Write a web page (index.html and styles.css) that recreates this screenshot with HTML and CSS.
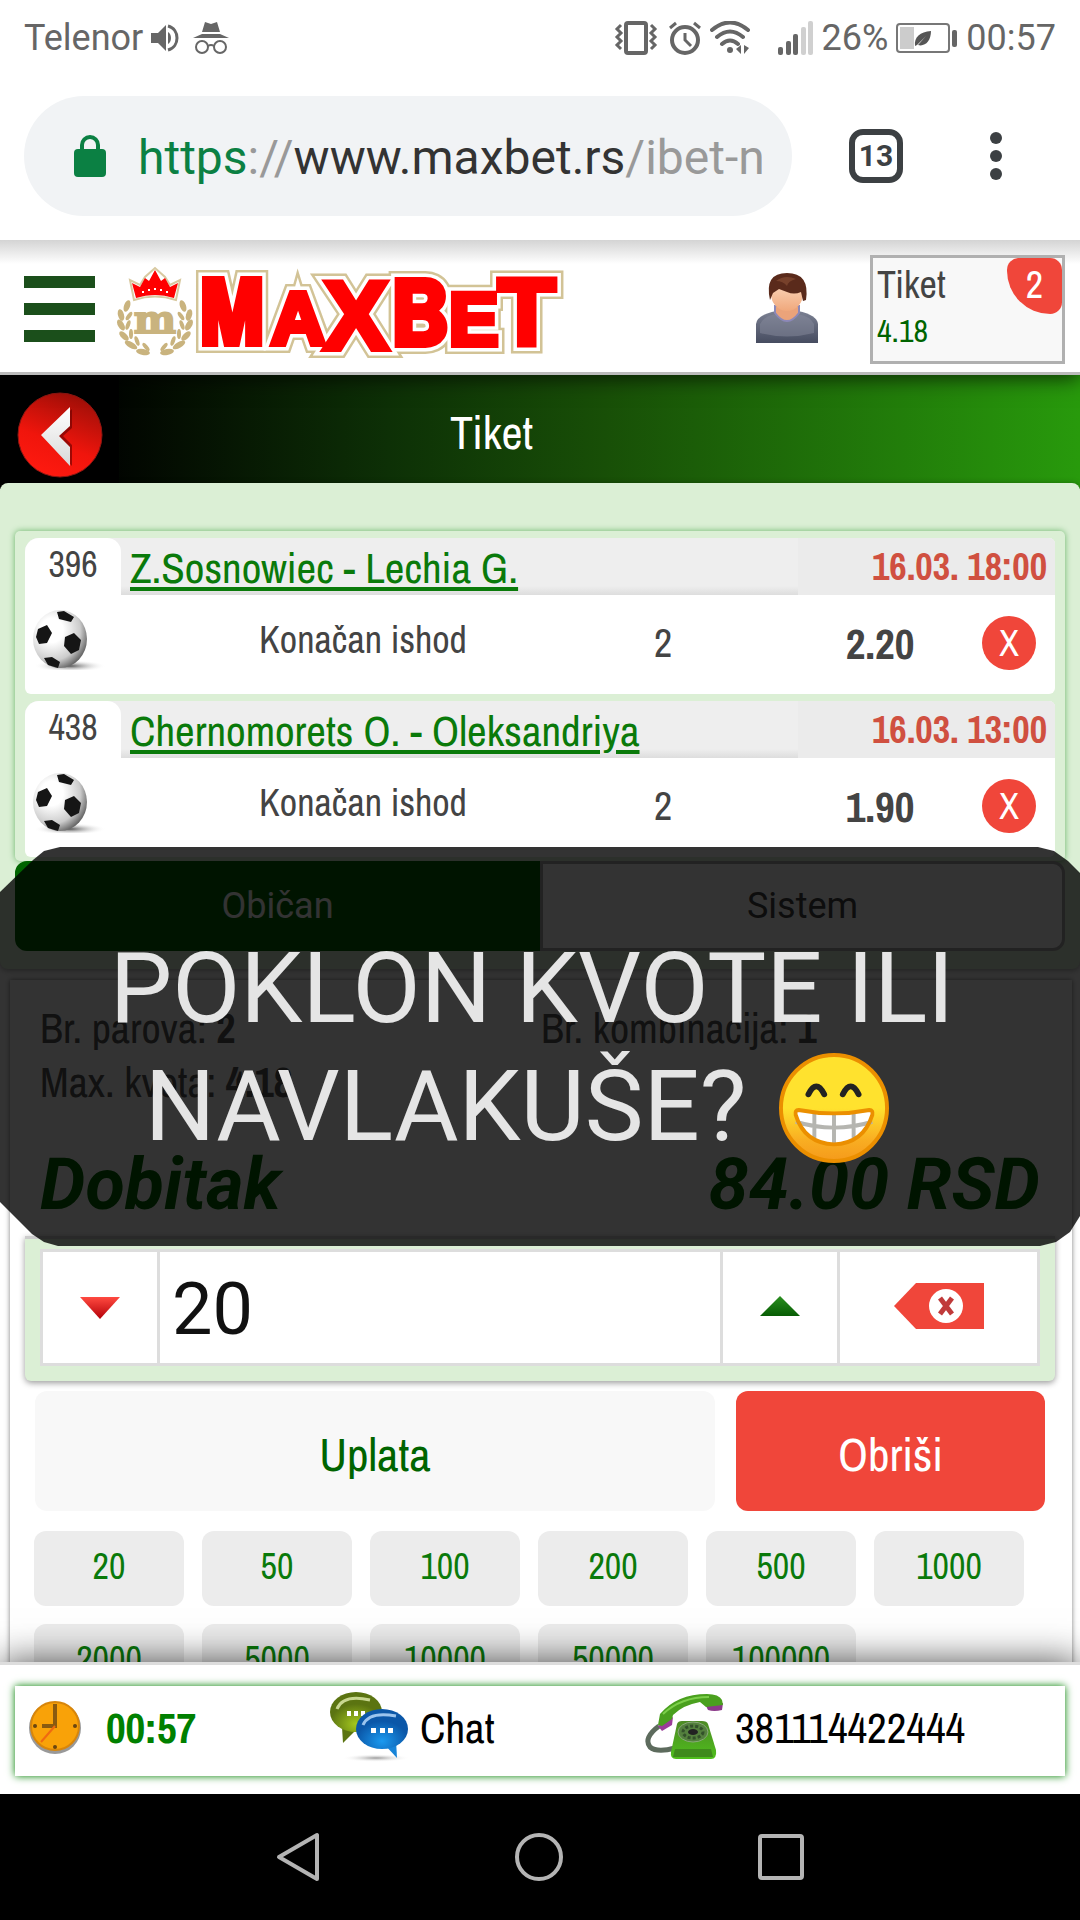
FILE: index.html
```html
<!DOCTYPE html>
<html lang="sr">
<head>
<meta charset="UTF-8">
<meta name="viewport" content="width=device-width, initial-scale=1.0">
<title>MaxBet - Tiket</title>
<link rel="stylesheet" href="styles.css">
</head>

<body>
<div class="screen">

  <!-- phone status bar -->
  <div class="status">
    <div class="status-left">
      <span>Telenor</span>
      <svg width="28" height="28" viewBox="0 0 28 28"><path d="M0 9h7l8-8v26l-8-8H0z" fill="#666"/><path d="M17 8c4 2 4 10 0 12z" fill="#666"/><path d="M17 2c12 3 12 21 0 24" fill="none" stroke="#666" stroke-width="3"/></svg>
      <svg class="incognito" width="36" height="34" viewBox="0 0 36 34"><path d="M12 1l6 2 6-2 3 10H9zM9 13h18l9 4H0z" fill="#666"/><g fill="none" stroke="#666" stroke-width="2"><circle cx="9" cy="26" r="6"/><circle cx="27" cy="26" r="6"/><path d="M15 25q3-2 6 0"/></g></svg>
    </div>
    <div class="status-right">
      <svg class="vibrate" width="44" height="34" viewBox="0 0 44 34" fill="none" stroke="#666"><rect x="12" y="2" width="20" height="30" rx="2" stroke-width="4"/><path d="M7 4l-4 4 4 4-4 4 4 4-4 4 4 4M37 4l4 4-4 4 4 4-4 4 4 4-4 4" stroke-width="3"/></svg>
      <svg width="34" height="34" viewBox="0 0 34 34" fill="none" stroke="#666" stroke-width="4"><circle cx="17" cy="19" r="13"/><path d="M17 12v7l6 6M2 7l6-5M32 7l-6-5" stroke-width="3"/></svg>
      <svg class="wifi" width="42" height="34" viewBox="0 0 42 34" fill="none" stroke="#666" stroke-width="4" stroke-linecap="round"><path d="M2 9q18-15 36 0M7 16q13-11 26 0M12 23q8-7 16 0"/><circle cx="20" cy="29" r="3" fill="#666" stroke="none"/><path d="M31 24v9l-5-5zM34 24v9l5-6z" fill="#666" stroke="none"/></svg>
      <svg width="36" height="34" viewBox="0 0 36 34"><g fill="#666"><rect x="0" y="26" width="5" height="8" rx="2"/><rect x="8" y="20" width="5" height="14" rx="2"/><rect x="15" y="13" width="5" height="21" rx="2"/></g><g fill="#d0d0d0"><rect x="23" y="6" width="5" height="28" rx="2"/><rect x="30" y="0" width="5" height="34" rx="2"/></g></svg>
      <span>26%</span>
      <svg width="62" height="30" viewBox="0 0 62 30"><rect x="1" y="1" width="52" height="28" rx="3" fill="none" stroke="#777" stroke-width="2"/><rect x="4" y="4" width="14" height="22" fill="#ccc"/><rect x="56" y="7" width="5" height="17" rx="2" fill="#666"/><path d="M19 23c-1-9 5-14 16-15 0 10-6 16-13 14l8-9-9 9z" fill="#555"/></svg>
      <span>00:57</span>
    </div>
  </div>

  <!-- browser bar -->
  <div class="browser">
    <div class="url">
      <svg width="32" height="42" viewBox="0 0 32 42"><rect y="14" width="32" height="28" rx="4" fill="#0b8043"/><path d="M8 15v-5a8 8 0 0 1 16 0v5" fill="none" stroke="#0b8043" stroke-width="4"/></svg>
      <div class="url-text"><span class="secure">https</span>://<span class="host">www.maxbet.rs</span>/ibet-n</div>
    </div>
    <button class="tabs-count" aria-label="Kartice">13</button>
    <button class="more" aria-label="Meni"><i></i><i></i><i></i></button>
  </div>

  <!-- site header -->
  <header class="header">
    <button class="burger" aria-label="Meni"><i></i><i></i><i></i></button>
    <a class="logo" href="#">
      <svg width="452" height="92" viewBox="0 0 452 92">
        <defs>
          <g id="word" font-weight="bold">
            <text class="narrow" font-size="94" x="83" y="75">M</text>
            <text font-size="75" x="154" y="75">A</text>
            <text font-size="96" x="207" y="80">X</text>
            <text class="narrow" font-size="94" x="275" y="76">B</text>
            <text font-size="74" x="332" y="76">E</text>
            <text font-size="94" x="381" y="76">T</text>
          </g>
          <g id="laurel" fill="#c9b37e">
            <ellipse cx="10" cy="37" rx="3" ry="6" transform="rotate(20 10 37)"/>
            <ellipse cx="4" cy="46" rx="3" ry="6" transform="rotate(-15 4 46)"/>
            <ellipse cx="12" cy="47" rx="2" ry="5" transform="rotate(35 12 47)"/>
            <ellipse cx="4" cy="56" rx="3" ry="6" transform="rotate(-30 4 56)"/>
            <ellipse cx="11" cy="56" rx="2" ry="5" transform="rotate(20 11 56)"/>
            <ellipse cx="7" cy="67" rx="3" ry="6" transform="rotate(-45 7 67)"/>
            <ellipse cx="14" cy="65" rx="2" ry="5"/>
            <ellipse cx="14" cy="76" rx="3" ry="7" transform="rotate(-60 14 76)"/>
            <ellipse cx="20" cy="72" rx="2" ry="5" transform="rotate(-20 20 72)"/>
            <ellipse cx="26" cy="83" rx="3" ry="7" transform="rotate(-80 26 83)"/>
            <ellipse cx="29" cy="78" rx="2" ry="5" transform="rotate(-40 29 78)"/>
          </g>
        </defs>
        <path d="M17 31l-4-20 10 5 5-8 10-9 10 9 5 8 10-5-4 20q-21-7-42 0z" fill="#fff" stroke="#d8c9a0" stroke-width="2"/>
        <path d="M19 29l-4-15 8 4 5-9 4 3 6-11 6 11 4-3 5 9 8-4-4 15q-19-6-38 0z" fill="#f00"/>
        <path d="M25 23h2M31 21h2M37 20h2M43 21h2M49 23h2" stroke="#fff" stroke-width="2"/>
        <use href="#laurel"/>
        <use href="#laurel" transform="matrix(-1 0 0 1 76 0)"/>
        <text class="logo-m" x="38" y="64" font-size="40" text-anchor="middle">m</text>
        <use href="#word" fill="#d2c396" stroke="#d2c396" stroke-width="18"/>
        <use href="#word" fill="#fff" stroke="#fff" stroke-width="13"/>
        <use href="#word" fill="#f00" stroke="#f00" stroke-width="6"/>
      </svg>
    </a>
    <button class="user" aria-label="Korisnik">
      <svg width="62" height="72" viewBox="0 0 62 72">
        <defs>
          <linearGradient id="shirt" x2="0" y2="1"><stop stop-color="#7b8092"/><stop offset="1" stop-color="#464c60"/></linearGradient>
          <linearGradient id="skin" x2="0" y2="1"><stop stop-color="#fde0c8"/><stop offset="1" stop-color="#f0a87c"/></linearGradient>
        </defs>
        <path d="M0 71V52q1-9 20-13h22q19 4 20 13v19z" fill="url(#shirt)"/>
        <path d="M4 52q4-8 16-10h22q12 2 16 10v9q-27 7-54 0z" fill="#858a9c" opacity=".5"/>
        <path d="M19 34h24v7q-12 16-24 0z" fill="#eba37a" stroke="#8c88b8" stroke-width="2"/>
        <ellipse cx="31" cy="22" rx="16" ry="17" fill="url(#skin)"/>
        <path d="M14 28Q8 1 31 1t19 27l-3 1-2-9q-7 3-14 0l-8-3-6 4z" fill="#5a2a1b"/>
        <path d="M20 9q9-7 20-2-8 2-9 7-4-5-11-5z" fill="#8a5137" opacity=".6"/>
      </svg>
    </button>
    <a class="ticket-box" href="#">
      <span class="ticket-name">Tiket</span>
      <span class="ticket-odd">4.18</span>
      <span class="ticket-badge">2</span>
    </a>
  </header>

  <main class="main">
    <div class="title-bar">
      <button class="back" aria-label="Nazad">
        <svg width="86" height="86" viewBox="0 0 86 86">
          <defs>
            <linearGradient id="red" x1=".7" x2=".3" y2="1"><stop stop-color="#9c0f08"/><stop offset=".6" stop-color="#f0150c"/><stop offset="1" stop-color="#ff1a10"/></linearGradient>
            <linearGradient id="silver" x2="0" y2="1"><stop stop-color="#fff"/><stop offset="1" stop-color="#d8d8d8"/></linearGradient>
          </defs>
          <circle cx="43" cy="43" r="42" fill="url(#red)" stroke="#8d1712" stroke-width="1"/>
          <path d="M55 17v19l-9 8 9 9v21L26 44z" fill="#600" opacity=".6"/>
          <path d="M53 15v19l-11 10 11 11v19L24 43z" fill="url(#silver)"/>
        </svg>
      </button>
      <h1>Tiket</h1>
    </div>

    <section class="slip">
      <div class="pairs">
        <article class="pair">
          <div class="pair-head">
            <span class="pair-no">396</span>
            <span class="pair-title"><a href="#">Z.Sosnowiec - Lechia G.</a></span>
            <time class="pair-date">16.03. 18:00</time>
          </div>
          <div class="pair-body">
            <svg class="ball" width="74" height="60" viewBox="0 0 74 60">
              <defs>
                <radialGradient id="ball" cx=".35" cy=".35" r=".7"><stop offset=".3" stop-color="#fff"/><stop offset=".75" stop-color="#ccc"/><stop offset="1" stop-color="#666"/></radialGradient>
                <radialGradient id="shade"><stop stop-color="#555"/><stop offset="1" stop-color="#fff" stop-opacity="0"/></radialGradient>
              </defs>
              <ellipse cx="38" cy="56" rx="36" ry="6" fill="url(#shade)"/>
              <ellipse cx="28" cy="29" rx="27" ry="29" fill="url(#ball)"/>
              <path d="M25 2l7-1 10 6-3 5-12-3zM6 19l9-4 5 8-5 10-8 1-3-7zM33 27l9-4 7 7-2 10-8 4-7-8zM12 48l8-1 8 5-2 6-10-3z" fill="#151515"/>
            </svg>
            <span class="pair-game">Konačan ishod</span>
            <span class="pair-pick">2</span>
            <b class="pair-odd">2.20</b>
            <button class="pair-remove">X</button>
          </div>
        </article>

        <article class="pair">
          <div class="pair-head">
            <span class="pair-no">438</span>
            <span class="pair-title"><a href="#">Chernomorets O. - Oleksandriya</a></span>
            <time class="pair-date">16.03. 13:00</time>
          </div>
          <div class="pair-body">
            <svg class="ball" width="74" height="60" viewBox="0 0 74 60">
              <ellipse cx="38" cy="56" rx="36" ry="6" fill="url(#shade)"/>
              <ellipse cx="28" cy="29" rx="27" ry="29" fill="url(#ball)"/>
              <path d="M25 2l7-1 10 6-3 5-12-3zM6 19l9-4 5 8-5 10-8 1-3-7zM33 27l9-4 7 7-2 10-8 4-7-8zM12 48l8-1 8 5-2 6-10-3z" fill="#151515"/>
            </svg>
            <span class="pair-game">Konačan ishod</span>
            <span class="pair-pick">2</span>
            <b class="pair-odd">1.90</b>
            <button class="pair-remove">X</button>
          </div>
        </article>
      </div>

      <div class="mode">
        <button class="active">Običan</button>
        <button>Sistem</button>
      </div>
    </section>

    <section class="payment">
      <div class="summary">
        <span>Br. parova: <b>2</b></span>
        <span>Br. kombinacija: <b>1</b></span>
        <span>Max. kvota: <b>4.18</b></span>
      </div>
      <div class="win"><span>Dobitak</span><span>84.00 RSD</span></div>

      <div class="amount">
        <div class="amount-row">
          <button aria-label="Manje"><svg width="40" height="22" viewBox="0 0 40 22"><defs><linearGradient id="down" x2="0" y2="1"><stop stop-color="#ff4a40"/><stop offset="1" stop-color="#b40008"/></linearGradient></defs><path d="M0 0h40L20 22z" fill="url(#down)"/></svg></button>
          <input type="text" id="uplata" value="20" aria-label="Iznos uplate">
          <button aria-label="Više"><svg width="40" height="20" viewBox="0 0 40 20"><defs><linearGradient id="up" x2="0" y2="1"><stop stop-color="#2a8f20"/><stop offset="1" stop-color="#075c04"/></linearGradient></defs><path d="M0 20h40L20 0z" fill="url(#up)"/></svg></button>
          <button aria-label="Poništi"><svg width="90" height="46" viewBox="0 0 90 46"><path d="M0 23L22 0h68v46H22z" fill="#f0463a"/><circle cx="52" cy="23" r="17" fill="#fff"/><path d="M46 15l12 16M58 15L46 31" stroke="#c03a3a" stroke-width="5"/></svg></button>
        </div>
      </div>

      <div class="actions">
        <button class="pay">Uplata</button>
        <button class="clear">Obriši</button>
      </div>

      <div class="chips">
        <button>20</button>
        <button>50</button>
        <button>100</button>
        <button>200</button>
        <button>500</button>
        <button>1000</button>
        <button>2000</button>
        <button>5000</button>
        <button>10000</button>
        <button>50000</button>
        <button>100000</button>
      </div>
    </section>
  </main>

  <footer class="footer">
    <div class="footer-box">
      <div class="clock">
        <svg width="54" height="54" viewBox="0 0 54 54"><circle cx="27" cy="28" r="26" fill="#999"/><circle cx="27" cy="26" r="24" fill="#f9a208" stroke="#d8860b" stroke-width="2"/><path d="M27 4v22H14" fill="none" stroke="#8a5a10" stroke-width="4"/><path d="M27 26L13 42" stroke="#f06a10" stroke-width="2"/><g fill="#6b4510"><circle cx="7" cy="26" r="2"/><circle cx="47" cy="26" r="2"/><circle cx="27" cy="47" r="2"/></g></svg>
        <b>00:57</b>
      </div>
      <a class="chat" href="#">
        <svg width="78" height="74" viewBox="0 0 78 74">
          <defs>
            <radialGradient id="olive" cx=".5" cy=".8"><stop stop-color="#a4c81e"/><stop offset="1" stop-color="#5b7411"/></radialGradient>
            <radialGradient id="blue" cx=".5" cy=".8"><stop stop-color="#1b9af0"/><stop offset="1" stop-color="#0b57a8"/></radialGradient>
          </defs>
          <ellipse cx="46" cy="68" rx="34" ry="4" fill="url(#shade)" opacity=".6"/>
          <path d="M12 37l1 16 13-13z" fill="#5b7411"/>
          <ellipse cx="26" cy="22" rx="26" ry="20" fill="url(#olive)"/>
          <path d="M7 19Q13 4 40 10" fill="none" stroke="#e4f0b0" stroke-width="3" opacity=".8"/>
          <path d="M17 21h4v5h-4zM24 21h4v5h-4zM31 21h4v5h-4z" fill="#fff"/>
          <path d="M54 54l13 14-1-18z" fill="#1784d8"/>
          <ellipse cx="52" cy="39" rx="26" ry="20" fill="url(#blue)"/>
          <path d="M33 35Q39 21 66 26" fill="none" stroke="#bfe0ff" stroke-width="3" opacity=".8"/>
          <path d="M41 38h5v5h-5zM50 38h5v5h-5zM58 38h5v5h-5z" fill="#fff"/>
        </svg>
        Chat
      </a>
      <a class="phone" href="#">
        <svg width="78" height="66" viewBox="0 0 78 66">
          <defs><linearGradient id="lime" x2="0" y2="1"><stop stop-color="#4d8a24"/><stop offset="1" stop-color="#4fbf1c"/></linearGradient></defs>
          <path d="M14 32Q-2 44 5 53q7 6 25 1" fill="none" stroke="#5d6b5d" stroke-width="5"/>
          <path d="M32 30q1-3 5-3h20q5 0 6 3l8 26q1 9-5 9H31q-6 0-5-7z" fill="url(#lime)"/>
          <path d="M30 55h36l2 8H28z" fill="#3f8a1c"/>
          <ellipse cx="48" cy="38" rx="15" ry="10" fill="#54803e" stroke="#88a878" stroke-width="1"/>
          <ellipse cx="48" cy="38" rx="10" ry="6" fill="none" stroke="#33512a" stroke-width="3" stroke-dasharray="3 2"/>
          <ellipse cx="48" cy="38" rx="5" ry="3" fill="#222"/>
          <path d="M13 32l15-9-1 8-10 6z" fill="#9a3c98"/>
          <path d="M60 10l18-1-1 7q-8 2-14 0z" fill="#8c3a8a"/>
          <path d="M13 31l2-11Q32 0 62 0q12 0 15 6l1 5-17 2-6-5Q38 11 28 21l-1 4-10 7z" fill="#4aa01e"/>
          <path d="M18 20Q36 3 64 3" fill="none" stroke="#7ccf4a" stroke-width="2"/>
        </svg>
        381114422444
      </a>
    </div>
  </footer>

  <!-- android buttons -->
  <nav class="nav">
    <button aria-label="Back"><svg width="44" height="50" viewBox="0 0 44 50"><path d="M41 3v44L3 25z" fill="none" stroke="#b4b4b4" stroke-width="4" stroke-linejoin="round"/></svg></button>
    <button aria-label="Home"><svg width="50" height="50" viewBox="0 0 50 50"><circle cx="25" cy="25" r="22" fill="none" stroke="#b4b4b4" stroke-width="4"/></svg></button>
    <button aria-label="Recent"><svg width="46" height="46" viewBox="0 0 46 46"><rect x="2" y="2" width="42" height="42" rx="2" fill="none" stroke="#b4b4b4" stroke-width="4"/></svg></button>
  </nav>

  <!-- caption over the page -->
  <div class="caption">
    <p>POKLON KVOTE ILI<br>NAVLAKUŠE? <svg width="110" height="110" viewBox="0 0 112 112" role="img" aria-label="smile">
      <defs><linearGradient id="face" x2="0" y2="1"><stop offset=".5" stop-color="#ffe22e"/><stop offset=".8" stop-color="#f9ae22"/><stop offset="1" stop-color="#f59a1b"/></linearGradient></defs>
      <circle cx="56" cy="56" r="54" fill="url(#face)" stroke="#eb8f00" stroke-width="4"/>
      <path d="M30 42q8-16 16 0M65 42q8-16 16 0" fill="none" stroke="#222" stroke-width="6" stroke-linecap="round"/>
      <path d="M20 58q36 7 72 0 4 0 3 5-9 29-39 30Q26 92 17 63q-1-5 3-5z" fill="#fff"/>
      <path d="M17 70q39 12 78 0M56 60v33M36 60v27M76 60v27" fill="none" stroke="#b5b5b0" stroke-width="4"/>
      <path d="M20 58q36 7 72 0 4 0 3 5-9 29-39 30Q26 92 17 63q-1-5 3-5z" fill="none" stroke="#eb8f00" stroke-width="4"/>
    </svg></p>
  </div>

</div>
</body>
</html>
```

FILE: styles.css
```css
* {
  box-sizing: border-box;
}

body {
  margin: 0;
  background: #fff;
  color: #444;
  font-family: "Archivo Narrow", "Liberation Sans Narrow", "Liberation Sans", sans-serif;
  font-size: 38px;
}

button,
input {
  font: inherit;
  color: inherit;
  border: none;
  padding: 0;
  margin: 0;
  background: none;
  border-radius: 0;
}

button {
  cursor: pointer;
}

a {
  color: inherit;
  text-decoration: none;
}

svg {
  display: block;
  flex: none;
}

.screen {
  position: relative;
  display: flex;
  flex-direction: column;
  height: 100vh;
  overflow: hidden;
}

/* status bar */
.status {
  display: flex;
  justify-content: space-between;
  align-items: center;
  flex: none;
  height: 72px;
  padding: 3px 24px 0;
  font-family: Roboto, sans-serif;
  font-size: 36px;
  color: #666;
}

.status-left,
.status-right {
  display: flex;
  align-items: center;
  gap: 8px;
}

.incognito {
  margin-left: 6px;
}

.vibrate {
  margin-right: 2px;
}

.wifi {
  margin-right: 18px;
}

/* browser bar */
.browser {
  display: flex;
  align-items: center;
  flex: none;
  position: relative;
  z-index: 2;
  height: 168px;
  padding: 0 78px 24px 24px;
  background: #fff;
  font-family: Roboto, sans-serif;
}

.url {
  display: flex;
  align-items: center;
  flex: 1;
  min-width: 0;
  height: 120px;
  margin-top: 24px;
  padding: 0 30px 0 50px;
  gap: 32px;
  border-radius: 60px;
  background: #f1f3f5;
}

.url-text {
  flex: 1;
  padding-top: 4px;
  overflow: hidden;
  white-space: nowrap;
  font-size: 48px;
  line-height: 60px;
  color: #999;
}

.secure {
  color: #0b8043;
}

.host {
  color: #333;
}

.tabs-count {
  width: 54px;
  height: 54px;
  margin: 24px 87px 0 57px;
  border: 6px solid #3c4043;
  border-radius: 14px;
  font-size: 30px;
  font-weight: bold;
  line-height: 42px;
  color: #3c4043;
}

.more {
  display: flex;
  flex-direction: column;
  gap: 6px;
  margin-top: 24px;
}

.more i {
  width: 12px;
  height: 12px;
  border-radius: 50%;
  background: #3c4043;
}

/* header */
.header {
  display: flex;
  align-items: flex-start;
  flex: none;
  position: relative;
  z-index: 1;
  height: 135px;
  padding: 15px 15px 0 24px;
  border-bottom: 3px solid #bbb;
  background: linear-gradient(#d4d4d4, #fff 24px);
  box-shadow: 0 3px 20px rgba(0, 0, 0, 0.7);
}

.burger {
  display: flex;
  flex-direction: column;
  gap: 15px;
  width: 71px;
  padding-top: 21px;
}

.burger i {
  height: 12px;
  background: #1b4f1b;
}

.logo {
  margin: 14px 0 0 22px;
}

.logo svg {
  overflow: visible;
  font-family: "Liberation Sans", sans-serif;
}

.narrow {
  font-family: "Archivo Narrow", "Liberation Sans Narrow", sans-serif;
}

.logo-m {
  font-family: "DejaVu Serif", serif;
  font-weight: bold;
  fill: #c9b37e;
  stroke: #c9b37e;
  stroke-width: 2px;
}

.user {
  margin: 17px 52px 0 auto;
}

.ticket-box {
  position: relative;
  display: flex;
  flex-direction: column;
  width: 195px;
  height: 109px;
  padding: 4px 4px 0;
  border: 3px solid #b0b0b0;
  background: #f8f8f8;
}

.ticket-name {
  line-height: 46px;
}

.ticket-odd {
  font-size: 32px;
  line-height: 46px;
  color: #006400;
}

.ticket-badge {
  position: absolute;
  top: 0;
  right: 0;
  width: 55px;
  height: 56px;
  border-radius: 12px 12px 12px 44px;
  background: #f0463a;
  color: #fff;
  line-height: 54px;
  text-align: center;
}

/* title */
.main {
  flex: 1;
  min-height: 0;
  overflow: hidden;
}

.title-bar {
  display: flex;
  align-items: center;
  height: 114px;
  margin-bottom: -6px;
  padding-bottom: 6px;
  background: linear-gradient(to right, #000 8%, #0d3006 36%, #184f07 56%, #289a0c);
}

.back {
  display: flex;
  align-items: center;
  width: 119px;
  height: 108px;
  padding: 12px 0 0 17px;
  background: #000;
}

.title-bar h1 {
  flex: 1;
  margin: 0;
  padding: 6px 216px 0 0;
  font-size: 46px;
  font-weight: normal;
  text-align: center;
  color: #fff;
}

/* pairs */
.slip {
  position: relative;
  padding: 48px 15px 18px;
  border-radius: 8px;
  background: #dbefd5;
  box-shadow: 0 1px 6px rgba(0, 0, 0, 0.4);
}

.pairs {
  display: flex;
  flex-direction: column;
  gap: 7px;
  padding: 7px 10px 4px;
  border-radius: 5px;
  box-shadow: 0 0 6px #69b569;
}

.pair {
  border-radius: 14px 6px 6px;
  overflow: hidden;
  background: #fff;
}

.pair-head {
  display: flex;
  height: 57px;
  background: #eee;
}

.pair-no {
  width: 96px;
  border-radius: 14px 14px 0 0;
  background: #fff;
  font-size: 36px;
  line-height: 52px;
  text-align: center;
}

.pair-title {
  flex: 1;
  padding-left: 9px;
  background: linear-gradient(#eee 48px, #ddd);
  font-size: 43px;
  line-height: 58px;
  color: #0a7a0a;
}

.pair-title a {
  text-decoration: underline;
  text-decoration-thickness: 4px;
  text-underline-offset: 4px;
}

.pair-date {
  width: 257px;
  padding-right: 8px;
  background: #ebebeb;
  font-weight: bold;
  line-height: 58px;
  text-align: right;
  color: #d05040;
}

.pair-body {
  display: grid;
  grid-template-columns: 156fr 364fr 236fr 198fr 76fr;
  align-items: center;
  height: 99px;
  padding-bottom: 4px;
  text-align: center;
}

.ball {
  margin: 0 0 6px 7px;
}

.pair-game {
  padding-bottom: 6px;
}

.pair-pick {
  font-size: 40px;
}

.pair-odd {
  font-size: 43px;
}

.pair-remove {
  width: 54px;
  height: 54px;
  margin-left: 3px;
  border-radius: 50%;
  background: #f0463a;
  color: #fff;
  font-size: 36px;
}

.mode {
  display: flex;
  height: 90px;
  border-radius: 12px;
  font-family: Roboto, sans-serif;
  font-size: 36px;
}

.mode button {
  flex: 1;
  border: 3px solid #aaa;
  border-radius: 0 12px 12px 0;
  background: #fff;
}

.mode .active {
  border-color: #006400;
  border-radius: 12px 0 0 12px;
  background: #006400;
  color: #fff;
}

/* payment */
.payment {
  margin: 11px 8px 0 10px;
  padding: 21px 17px 0 15px;
  box-shadow: 0 0 5px rgba(0, 0, 0, 0.5);
}

.summary {
  display: grid;
  grid-template-columns: 501fr 514fr;
  padding-left: 15px;
  font-size: 42px;
  line-height: 54px;
  color: #555;
}

.win {
  display: flex;
  justify-content: space-between;
  height: 127px;
  padding: 31px 15px 0;
  font-family: Roboto, sans-serif;
  font-size: 72px;
  font-weight: bold;
  font-style: italic;
  line-height: 90px;
  color: #006400;
}

.amount {
  padding: 10px 15px 15px;
  border-top: 3px solid #ccc;
  border-radius: 0 0 6px 6px;
  background: #dbefd5;
  box-shadow: 0 2px 6px rgba(0, 0, 0, 0.4);
}

.amount-row {
  display: flex;
  height: 117px;
  border: 3px solid #ddd;
  background: #fff;
}

.amount-row button {
  display: flex;
  align-items: center;
  justify-content: center;
  width: 114px;
  padding-bottom: 4px;
}

.amount-row button:first-child {
  padding-bottom: 0;
}

.amount-row button:last-child {
  width: 200px;
  border-left: 3px solid #ddd;
}

.amount-row input {
  flex: 1;
  min-width: 0;
  padding: 4px 0 0 12px;
  border: solid #ddd;
  border-width: 0 3px;
  font-family: Roboto, sans-serif;
  font-size: 72px;
  color: #111;
}

.actions {
  display: flex;
  gap: 21px;
  padding: 10px 10px 20px;
}

.actions button {
  height: 120px;
  padding-top: 6px;
  border-radius: 12px;
  font-size: 47px;
}

.pay {
  flex: 1;
  background: #f8f8f8;
  color: #006400;
}

.actions .clear {
  width: 309px;
  background: #f0463a;
  color: #fff;
}

.chips {
  display: flex;
  flex-wrap: wrap;
  gap: 18px;
  padding-left: 9px;
}

.chips button {
  width: 150px;
  height: 75px;
  padding-bottom: 6px;
  border-radius: 12px;
  background: #ececec;
  font-size: 36px;
  color: #0a7a0a;
}

/* footer */
.footer {
  position: relative;
  flex: none;
  padding: 21px 15px 18px;
  border-top: 3px solid #ddd;
  background: #fff;
  box-shadow: 0 0 36px rgba(0, 0, 0, 0.7);
}

.footer-box {
  display: grid;
  grid-template-columns: 315fr 315fr 420fr;
  align-items: center;
  height: 90px;
  padding-bottom: 9px;
  box-shadow: 0 0 8px #008000;
  font-size: 43px;
  color: #000;
}

.clock,
.chat,
.phone {
  display: flex;
  align-items: center;
  gap: 12px;
}

.clock {
  gap: 24px;
  padding-left: 13px;
  color: #008000;
}

/* android nav */
.nav {
  display: flex;
  align-items: center;
  justify-content: center;
  gap: 194px;
  position: relative;
  flex: none;
  height: 126px;
  background: #000;
}

/* caption */
.caption {
  position: absolute;
  top: 847px;
  left: 0;
  right: 0;
  height: 399px;
  padding: 82px 16px 0 0;
  background: rgba(0, 0, 0, 0.8);
  clip-path: polygon(0 45px, 33px 13px, 44px 4px, 60px 0, calc(100% - 42px) 0, calc(100% - 26px) 4px, calc(100% - 12px) 14px, 100% 26px, 100% calc(100% - 30px), calc(100% - 10px) calc(100% - 14px), calc(100% - 24px) calc(100% - 4px), calc(100% - 40px) 100%, 58px 100%, 44px calc(100% - 4px), 32px calc(100% - 12px), 0 calc(100% - 44px));
}

.caption p {
  margin: 0;
  font-family: Roboto, sans-serif;
  font-size: 99px;
  line-height: 118px;
  text-align: center;
  color: #e5e5e5;
}

.caption svg {
  display: inline-block;
  vertical-align: -20px;
  margin: -20px 30px -20px 8px;
  vertical-align: -3px;
}
```
